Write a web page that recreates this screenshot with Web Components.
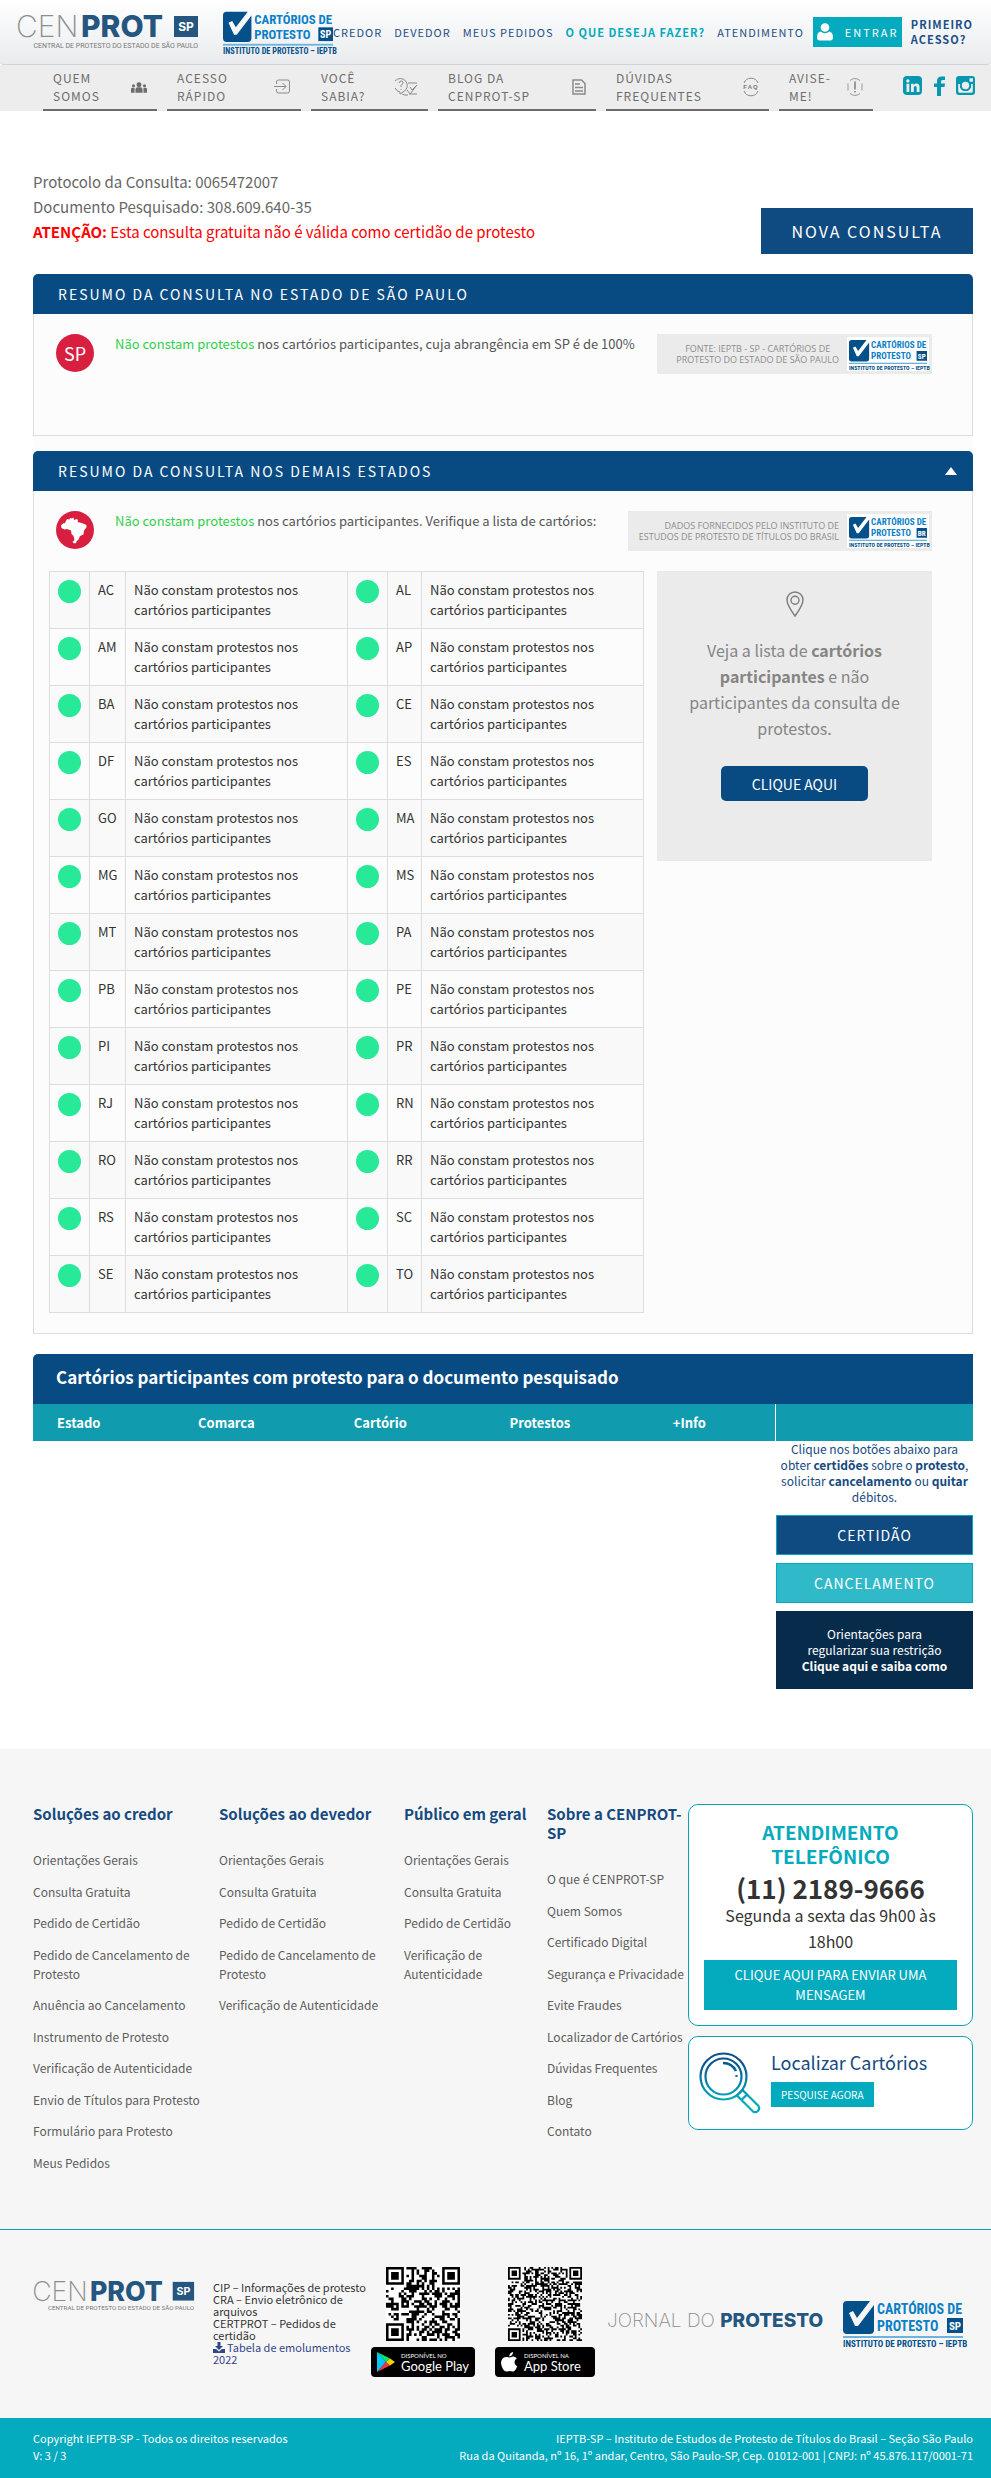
<!DOCTYPE html>
<html lang="pt-BR">
<head>
<meta charset="utf-8">
<meta name="viewport" content="width=device-width, initial-scale=1">
<title>CENPROT SP - Consulta de protesto</title>
<style>
  body { margin: 0; background: #fff; color: #333; font-family: "Noto Sans CJK SC", "Noto Sans", sans-serif; font-size: 13px; line-height: 20px; }
</style>
</head>
<body>
<cp-page></cp-page>

<script>
const BASE = `
  *, *::before, *::after { box-sizing: border-box; }
  :host { display: block; }
  a { color: inherit; text-decoration: none; }
  button { font: inherit; color: inherit; border: 0; margin: 0; cursor: pointer; }
  h2, h3, p, ul { margin: 0; padding: 0; font-size: inherit; font-weight: inherit; }
  ul { list-style: none; }
  svg { display: block; overflow: visible; }
`;

function component(name, css, html) {
  customElements.define(name, class extends HTMLElement {
    constructor() {
      super();
      this.attachShadow({ mode: 'open' });
    }
    connectedCallback() {
      const t = document.createElement('template');
      t.innerHTML = `<style>${BASE}${css}</style>` + (typeof html === 'function' ? html(this) : html);
      this.shadowRoot.replaceChildren(t.content.cloneNode(true));
    }
  });
}

/* ---------- logos ---------- */

component('cenprot-logo', `svg { width: 100%; height: auto; }`, `
  <svg viewBox="0 0 182 34" role="img" aria-label="CENPROT SP">
    <g font-family="Inter, sans-serif" font-size="30">
      <text x="-1" y="22" font-weight="200" fill="#8d8d8d">CEN</text>
      <text x="64" y="22" font-weight="800" fill="#24567f">PROT</text>
    </g>
    <rect x="157" y="1" width="24" height="21" fill="#24567f"/>
    <text x="169" y="16" text-anchor="middle" font-family="Inter, sans-serif" font-size="12" font-weight="700" fill="#fff">SP</text>
    <text x="181" y="33" text-anchor="end" font-family="Roboto, sans-serif" font-size="7" fill="#777">CENTRAL DE PROTESTO DO ESTADO DE SÃO PAULO</text>
  </svg>`);

component('cartorios-logo', `svg { width: 100%; height: auto; }`, el => `
  <svg viewBox="0 0 120 50" role="img" aria-label="Cartórios de Protesto">
    <path d="M4 3h23l-13 17-4-7-4 2 6 13h3L31 7v25a4 4 0 0 1-4 4H4a4 4 0 0 1-4-4V7a4 4 0 0 1 4-4z" fill="#04508a"/>
    <g font-family="'Liberation Sans Narrow', 'Roboto Condensed', 'Liberation Sans', sans-serif" font-weight="700">
      <text x="34" y="16" font-size="14" fill="#0b7fc7">CARTÓRIOS DE</text>
      <text x="34" y="33" font-size="14" fill="#0b7fc7">PROTESTO</text>
      <rect x="104" y="20" width="16" height="15" fill="#04508a"/>
      <text x="112" y="32" font-size="11" text-anchor="middle" fill="#fff">${el.getAttribute('uf') || 'SP'}</text>
      <rect y="38" width="120" height="2" fill="#6fb3dd"/>
      <text x="0" y="49" font-size="9" fill="#04508a">INSTITUTO DE PROTESTO – IEPTB</text>
    </g>
  </svg>`);

/* ---------- icons ---------- */

const ICONS = {
  people: ['0 0 18 12', `<g fill="#6d6d6d"><circle cx="9" cy="3" r="2.8"/><path d="M5 12V8.500q0-2.500 2.500-2.500h3q2.500 0 2.500 2.500V12z"/><circle cx="2.800" cy="4.300" r="1.700"/><circle cx="15.200" cy="4.300" r="1.700"/><path d="M0 12V8q0-1.500 1.500-1.500H4V12zM18 12V8q0-1.500-1.500-1.500H14V12z"/></g>`, 16],
  enter: ['0 0 17 16', `<g fill="none" stroke="#8a8a8a"><path d="M2.500 5V3q0-2 2-2h9q2 0 2 2v9q0 2-2 2h-9q-2 0-2-2v-2M0 7.500h12M8.500 4l3.500 3.500L8.500 11"/></g>`, 17],
  ask: ['0 0 24 20', `<g fill="none" stroke="#8a8a8a"><path d="M1 4A7 7 0 1 1 9 15l-3 2v-2A7 7 0 0 1 1 11M5 6q.5-2.500 3-2 2 1 .5 3L7 8.500V10M7 12v1M14 6h9M15 17h8M13 13l3 4 7-9M16 10l2 3 4-4M8 17l3 1h3"/></g>`, 24],
  doc: ['0 0 14 16', `<g fill="none" stroke="#8a8a8a" stroke-width="1.500"><path d="M1 1h8.500L13 4.500V15H1z"/><path d="M3 5h5M3 8.500h8M3 12h8"/></g>`, 14],
  faq: ['0 0 16 20', `<g fill="none" stroke="#8a8a8a"><path d="M1 6A7.500 7.500 0 0 1 15 6M1 14a7.500 7.500 0 0 0 14 0"/></g><text x="8" y="12" font-size="6" font-weight="700" fill="#777" text-anchor="middle" font-family="Liberation Sans, sans-serif">FAQ</text>`, 16],
  alert: ['0 0 16 20', `<g fill="none" stroke="#9a9a9a"><path d="M3 3.500A7.500 7.500 0 0 1 13 3.500M1 6.500v7M15 6.500v7M3 16.500A7.500 7.500 0 0 0 13 16.500"/><path d="M8 4.500v8M8 14v1.500" stroke-width="2"/></g>`, 16],
  linkedin: ['0 0 20 20', `<rect width="19" height="19" rx="4" fill="#0698ae"/><g fill="#eee"><circle cx="4.900" cy="4.900" r="1.700"/><path d="M3.500 7.800h2.800V16H3.500zM8 7.800h2.700v1.100q1-1.400 2.800-1.300 3 .2 3 3.600V16h-2.800v-4.500q0-1.600-1.400-1.600T10.800 11.500V16H8z"/></g>`, 20],
  facebook: ['0 0 11 20', `<path d="M3 20v-9H0V7.500h3V5Q3 .5 7.500.5H11V4H8.500Q7 4 7 5.500v2h4l-.5 3.500H7v9z" fill="#0698ae"/>`, 11],
  instagram: ['0 0 20 20', `<path fill-rule="evenodd" d="M3 0h13q3 0 3 3v13q0 3-3 3H3q-3 0-3-3V3q0-3 3-3zM13.500 2.300v3.400h3.400V2.300zM2.200 8v7.200q0 1.600 1.600 1.600h11.400q1.600 0 1.600-1.600V8h-1.900A5.600 5.600 0 1 1 4.100 8z" fill="#0698ae"/><circle cx="9.500" cy="9.500" r="4.600" fill="none" stroke="#0698ae" stroke-width="2"/><circle cx="9.500" cy="9.500" r="3.700" fill="#ededed"/>`, 20],
  user: ['0 0 16 18', `<g fill="#fff"><circle cx="8" cy="4.500" r="4.300"/><path d="M3.500 8.500q4.500 3.500 9 0Q16 9.500 16 14q0 3.500-2.500 3.500h-11Q0 17.500 0 14q0-4.500 3.500-5.500z"/></g>`, 16],
  pin: ['0 0 18 26', `<g fill="none" stroke="#7c7c7c" stroke-width="1.400"><path d="M9 25Q1 14 1 9a8 8 0 0 1 16 0q0 5-8 16z"/><circle cx="9" cy="9.300" r="4"/></g>`, 18],
  download: ['0 0 12 11', `<path d="M4.500 0h3v4H10L6 8 2 4h2.500zM0 7h3l3 2.500L9 7h3v4H0z" fill="#33478a"/>`, 12],
  up: ['0 0 12 8', `<path d="M6 0l6 8H0z" fill="#fff"/>`, 12],
  lens: ['0 0 62 62', `<defs><linearGradient id="g" gradientUnits="userSpaceOnUse" x1="0" y1="10" x2="0" y2="48"><stop offset="0" stop-color="#08528f"/><stop offset="1" stop-color="#04a9bb"/></linearGradient></defs><g fill="none" stroke="url(#g)" stroke-width="2.200"><circle cx="24.500" cy="24.500" r="23"/><circle cx="24.500" cy="24.500" r="18"/><path d="M24 11Q33 11 37 19" stroke-width="2.600"/><path d="M37.500 23v2"/><path d="M38 43.500 43.500 38 59.500 54A4 4 0 0 1 54 59.500zM42.500 48l5.500-5.500"/></g>`, 62],
  brazil: ['0 0 38 38', `<circle cx="19" cy="19" r="19" fill="#d81f40"/><path d="M11 8l2.500.5.500-1.500 2 .5 1.500-1 .5 2.500 3-1 1 1.500-.5 1.500 4 1 4 1.500q2 1.500.5 3.500l-2 2.500-.5 4-3.500 1.500-1.500 3.500-2 2-1 2-2-.5-1-1 2-2-1-4-2-2-.5-3.500-4-1.500-2.500.5-3-1.500-.5-2.500 2-2 2-.5z" fill="#fff"/>`, 38]
};
component('cp-icon', `:host { display: inline-block; flex: none; }`, el => {
  const [box, body, width] = ICONS[el.getAttribute('name')];
  return `<svg viewBox="${box}" width="${width}" aria-hidden="true">${body}</svg>`;
});

/* ---------- header ---------- */

component('site-header', `
  header { display: flex; align-items: center; min-height: 65px; padding: 0 18px 0 17px; background: linear-gradient(#fff, #e9ebee); border-bottom: 1px solid #cfd3da; border-radius: 0 0 4px 4px; }
  cenprot-logo { flex: 0 0 182px; margin-right: 24px; }
  cartorios-logo { flex: 0 0 110px; }
  nav { flex: 1; display: flex; align-items: center; color: #1b4f86; font-size: 11px; line-height: 15px; letter-spacing: 1px; white-space: nowrap; }
  nav > a { margin-right: 12px; }
  nav > a.on { color: #04aabd; font-weight: 700; }
  nav > a.enter { display: flex; align-items: center; gap: 12px; width: 89px; height: 30px; margin: 0 9px 0 -3px; padding: 0 4px; background: #04aabd; color: #fff; font-size: 11px; letter-spacing: 2px; }
  nav > a.first { white-space: normal; margin: 0; font-weight: 700; color: #1b4f86; }
`, `
  <header>
    <cenprot-logo></cenprot-logo>
    <cartorios-logo></cartorios-logo>
    <nav>
      <a href="#">CREDOR</a><a href="#">DEVEDOR</a><a href="#">MEUS PEDIDOS</a>
      <a href="#" class="on">O QUE DESEJA FAZER?</a><a href="#">ATENDIMENTO</a>
      <a href="#" class="enter"><cp-icon name="user"></cp-icon>ENTRAR</a>
      <a href="#" class="first">PRIMEIRO ACESSO?</a>
    </nav>
  </header>`);

component('sub-nav', `
  nav { display: flex; min-height: 46px; background: #ededed; padding: 0 15px 0 43px; }
  .items { flex: 1; display: grid; grid-template-columns: 114fr 134fr 117fr 158fr 163fr 94fr; gap: 10px; }
  .items a { display: flex; align-items: center; justify-content: space-between; padding: 0 10px; border-bottom: 2px solid #6d6d6d; color: #6d6d6d; font-size: 12px; line-height: 18px; letter-spacing: 1px; white-space: nowrap; }
  .social { display: flex; align-items: center; gap: 11px; margin-left: 30px; }
`, `
  <nav>
    <div class="items">
      <a href="#"><span>QUEM<br>SOMOS</span><cp-icon name="people"></cp-icon></a>
      <a href="#"><span>ACESSO<br>RÁPIDO</span><cp-icon name="enter"></cp-icon></a>
      <a href="#"><span>VOCÊ<br>SABIA?</span><cp-icon name="ask"></cp-icon></a>
      <a href="#"><span>BLOG DA<br>CENPROT-SP</span><cp-icon name="doc"></cp-icon></a>
      <a href="#"><span>DÚVIDAS<br>FREQUENTES</span><cp-icon name="faq"></cp-icon></a>
      <a href="#"><span>AVISE-<br>ME!</span><cp-icon name="alert"></cp-icon></a>
    </div>
    <div class="social">
      <a href="#" aria-label="LinkedIn"><cp-icon name="linkedin"></cp-icon></a>
      <a href="#" aria-label="Facebook"><cp-icon name="facebook"></cp-icon></a>
      <a href="#" aria-label="Instagram"><cp-icon name="instagram"></cp-icon></a>
    </div>
  </nav>`);

/* ---------- query summary ---------- */

component('query-info', `
  :host { display: flex; justify-content: space-between; align-items: flex-end; margin: 58px 0 20px; }
  p { font-size: 15px; line-height: 25px; color: #666; padding-bottom: 10px; }
  .warn { color: #f00; }
  button { width: 212px; height: 46px; padding: 0; background: #0f4a80; color: #fff; font-size: 16px; letter-spacing: 2px; }
`, `
  <p>Protocolo da Consulta: 0065472007<br>Documento Pesquisado: 308.609.640-35<br>
  <span class="warn"><b>ATENÇÃO:</b> Esta consulta gratuita não é válida como certidão de protesto</span></p>
  <button type="button">NOVA CONSULTA</button>`);

component('result-panel', `
  h2 { display: flex; align-items: center; justify-content: space-between; min-height: 40px; padding: 0 16px 0 25px; background: #084a82; color: #fff; border-radius: 5px 5px 0 0; font-size: 14px; letter-spacing: 2px; }
  .body { background: #fcfcfc; border: 1px solid #ddd; border-top: 0; padding: 20px 40px 20px 15px; }
  .top { display: flex; align-items: flex-start; min-height: 60px; }
  .mark { width: 38px; margin: 0 21px 0 7px; }
  .text { flex: 1; font-size: 13px; line-height: 20px; color: #555; white-space: nowrap; }
`, el => `
  <h2>${el.getAttribute('heading')}${el.hasAttribute('open') ? '<cp-icon name="up"></cp-icon>' : ''}</h2>
  <div class="body">
    <div class="top"><div class="mark"><slot name="mark"></slot></div><div class="text"><slot name="text"></slot></div><slot name="source"></slot></div>
    <slot></slot>
  </div>`);

component('sp-mark', `
  :host { display: grid; place-items: center; width: 38px; height: 38px; border-radius: 50%; background: #d81f40; color: #fff; font: 18px/20px "Noto Sans CJK SC", sans-serif; }
`, `SP`);

component('source-badge', `
  :host { display: flex; align-items: center; justify-content: flex-end; gap: 8px; height: 40px; padding: 0 3px 0 9px; background: #ebebeb; color: #8d8d8d; font: 9px/11px "Open Sans", sans-serif; white-space: nowrap; }
  cartorios-logo { width: 82px; padding: 1px 2px; background: #fff; }
`, el => `<div><slot></slot></div><cartorios-logo uf="${el.getAttribute('uf')}"></cartorios-logo>`);

const STATES = ['AC AL', 'AM AP', 'BA CE', 'DF ES', 'GO MA', 'MG MS', 'MT PA', 'PB PE', 'PI PR', 'RJ RN', 'RO RR', 'RS SC', 'SE TO'];
component('state-table', `
  table { width: 100%; border-collapse: collapse; table-layout: fixed; }
  td { border: 1px solid #ddd; padding: 8px; vertical-align: top; font-size: 13px; line-height: 20px; color: #333; }
  tr:nth-child(odd) { background: #f9f9f9; }
  .c1 { width: 40px; } .c2 { width: 36px; } .c3 { width: 34px; }
  i { display: block; width: 23px; height: 23px; border-radius: 50%; background: #27e998; }
  td span { display: block; max-width: 170px; }
`, `<table><colgroup><col class="c1"><col class="c2"><col><col class="c1"><col class="c3"><col></colgroup><tbody>${
  STATES.map(r => '<tr>' + r.split(' ').map(s => `<td><i></i></td><td>${s}</td><td><span>Não constam protestos nos cartórios participantes</span></td>`).join('') + '</tr>').join('')
}</tbody></table>`);

component('list-card', `
  :host { background: #ebebeb; color: #858585; text-align: center; padding: 20px 20px 60px; }
  p { font-size: 16px; line-height: 26px; margin: 15px 0 25px; }
  button { width: 147px; height: 35px; padding: 0; border-radius: 5px; background: #084a82; color: #fff; font-size: 14px; }
`, `<cp-icon name="pin"></cp-icon>
  <p>Veja a lista de <b>cartórios participantes</b> e não participantes da consulta de protestos.</p>
  <button type="button">CLIQUE AQUI</button>`);

/* ---------- participating offices ---------- */

component('office-table', `
  h2 { padding: 12px 23px; min-height: 50px; line-height: 22px; background: #084a82; color: #fff; font-size: 17px; font-weight: 700; border-radius: 5px 0 0 0; }
  .cols { display: flex; align-items: flex-start; gap: 1px; }
  table { flex: 1; border-collapse: collapse; table-layout: fixed; }
  th { height: 37px; padding: 0 0 0 24px; background: #109cae; color: #fff; font-size: 13px; font-weight: 700; text-align: left; }
  aside { flex: 0 0 197px; font-size: 12px; line-height: 16px; color: #164a80; text-align: center; }
  .bar { height: 37px; background: #109cae; }
  aside p { padding-bottom: 10px; white-space: nowrap; }
  aside button { display: block; width: 100%; height: 40px; margin-bottom: 8px; padding: 0; border: 1px solid #04aabd; color: #fff; font-size: 14px; letter-spacing: 1px; }
  .a { background: #0f4a80; } .b { background: #30bac9; }
  .c { display: grid; align-content: center; height: 78px; background: #072b4b; color: #fff; }
`, `
  <h2>Cartórios participantes com protesto para o documento pesquisado</h2>
  <div class="cols">
    <table>
      <colgroup><col style="width:19%"><col style="width:21%"><col style="width:21%"><col style="width:22%"><col style="width:17%"></colgroup>
      <thead><tr><th>Estado</th><th>Comarca</th><th>Cartório</th><th>Protestos</th><th>+Info</th></tr></thead>
    </table>
    <aside>
      <div class="bar"></div>
      <p>Clique nos botões abaixo para<br>obter <b>certidões</b> sobre o <b>protesto</b>,<br>solicitar <b>cancelamento</b> ou <b>quitar</b><br>débitos.</p>
      <button type="button" class="a">CERTIDÃO</button>
      <button type="button" class="b">CANCELAMENTO</button>
      <a class="c" href="#"><span>Orientações para<br>regularizar sua restrição<br><b>Clique aqui e saiba como</b></span></a>
    </aside>
  </div>`);

/* ---------- footer ---------- */

component('link-column', `
  h3 { color: #164a80; font-size: 15px; line-height: 19px; font-weight: 700; margin-bottom: 27px; }
  li { font-size: 12px; line-height: 19px; color: #5d5d5d; margin-bottom: 12px; }
  li:nth-child(odd) { margin-bottom: 13px; }
`, el => `<h3>${el.getAttribute('heading')}</h3><ul>${el.getAttribute('links').split('|').map(l => `<li><a href="#">${l}</a></li>`).join('')}</ul>`);

component('contact-cards', `
  section { background: #fff; border: 1px solid #04a5b8; border-radius: 10px; }
  .phone { padding: 15px 15px; text-align: center; margin-bottom: 10px; }
  h3 { color: #04aabd; font-size: 19px; line-height: 24px; font-weight: 700; }
  .num { font-size: 26px; line-height: 28px; padding: 6px 0 0; font-weight: 700; color: #333; }
  .when { font-size: 16px; line-height: 26px; padding: 0 18px 6px; }
  button { background: #04aabd; color: #fff; }
  .msg { display: block; width: 100%; padding: 5px 20px; font-size: 13px; line-height: 20px; }
  .find { display: flex; gap: 10px; align-items: flex-start; padding: 15px 10px; min-height: 94px; }
  .find h3 { color: #164a80; font-size: 18px; line-height: 20px; font-weight: 400; margin-bottom: 10px; }
  .find button { height: 25px; padding: 0 10px; font-size: 10px; line-height: 20px; }
`, `
  <section class="phone">
    <h3>ATENDIMENTO<br>TELEFÔNICO</h3>
    <p class="num">(11) 2189-9666</p>
    <p class="when">Segunda a sexta das 9h00 às 18h00</p>
    <button type="button" class="msg">CLIQUE AQUI PARA ENVIAR UMA MENSAGEM</button>
  </section>
  <section class="find">
    <cp-icon name="lens"></cp-icon>
    <div><h3>Localizar Cartórios</h3><button type="button">PESQUISE AGORA</button></div>
  </section>`);

/* QR artwork: three finder squares, the rest filled from a seeded sequence */
function qr(n, seed) {
  let d = '', s = seed;
  const inFinder = (x, y) => (x < 8 && y < 8) || (x > n - 9 && y < 8) || (x < 8 && y > n - 9);
  for (let y = 0; y < n; y++) for (let x = 0; x < n; x++) {
    s = (s * 1103515245 + 12345) % 2147483648;
    if (!inFinder(x, y) && (s >> 16) % 2) d += `M${x} ${y}h1v1h-1z`;
  }
  for (const [x, y] of [[0, 0], [n - 7, 0], [0, n - 7]])
    d += `M${x} ${y}h7v7h-7zM${x + 1} ${y + 1}v5h5v-5zM${x + 2} ${y + 2}h3v3h-3z`;
  return `<svg class="qr" viewBox="0 0 ${n} ${n}" aria-hidden="true"><rect width="${n}" height="${n}" fill="#fff"/><path d="${d}"/></svg>`;
}
component('store-badge', `
  :host { display: grid; justify-items: center; gap: 6px; }
  .qr { width: 74px; height: 74px; }
  a { display: flex; align-items: center; gap: 6px; width: 100%; height: 30px; padding: 0 6px; border-radius: 4px; background: #000; color: #fff; white-space: nowrap; font: 13px/14px Lato, sans-serif; }
  small { display: block; font-size: 6px; line-height: 7px; }
`, el => el.getAttribute('store') === 'google'
  ? qr(29, 7) + `<a href="#"><svg width="18" height="20" viewBox="0 0 18 20"><path d="M0 0v20l9-10z" fill="#00c8ff"/><path d="M0 0l9 10 4-3.500z" fill="#00e676"/><path d="M0 20l9-10 4 3.500z" fill="#f43249"/><path d="M13 6.500l5 3.500-5 3.500L9 10z" fill="#ffd200"/></svg><span><small>DISPONÍVEL NO</small>Google Play</span></a>`
  : qr(41, 23) + `<a href="#"><svg width="17" height="20" viewBox="0 0 17 20" fill="#fff"><path d="M8.500 5.500Q9.500 5.500 11 4.800q3-.8 4.800 1.700-2.500 1.500-2.300 4t2.800 3.800q-2.500 6-5 5.200-2.500-1-5 0Q3 20 1 15T1.200 7Q3 4.500 6 5zM8.200 4.500Q8.500.8 12 0q.2 3.800-3.800 4.500z"/></svg><span><small>DISPONÍVEL NA</small>App Store</span></a>`);

component('site-footer', `
  footer { background: #f6f6f6; margin-top: 60px; }
  .links { display: grid; grid-template-columns: 186fr 185fr 143fr 141fr 285fr; padding: 55px 18px 45px 33px; }
  .brands { display: flex; border-top: 1px solid #04a5b8; padding: 37px 28px 41px 33px; }
  .brands > cenprot-logo { flex: 0 0 162px; margin-top: 14px; }
  .list { flex: 0 0 158px; margin-left: 18px; padding-top: 14px; font-size: 11px; line-height: 12px; }
  .list a { color: #33478a; } .list cp-icon { margin-right: 2px; height: 10px; }
  store-badge { flex: 0 0 102px; }
  store-badge + store-badge { flex-basis: 100px; margin-left: 20px; }
  .jornal { margin: 43px 0 0 12px; flex: 1; font: 19px/22px Inter, sans-serif; font-weight: 200; color: #8d8d8d; white-space: nowrap; }
  .jornal b { font-weight: 800; color: #24567f; }
  .brands > cartorios-logo { flex: 0 0 120px; margin-top: 31px; }
  .legal { display: flex; justify-content: space-between; padding: 12px 18px 14px 33px; background: #04aabd; color: #fff; font-size: 11px; line-height: 17px; }
  .legal p + p { text-align: right; }
`, `
  <footer>
    <div class="links">
      <link-column heading="Soluções ao credor" links="Orientações Gerais|Consulta Gratuita|Pedido de Certidão|Pedido de Cancelamento de<br>Protesto|Anuência ao Cancelamento|Instrumento de Protesto|Verificação de Autenticidade|Envio de Títulos para Protesto|Formulário para Protesto|Meus Pedidos"></link-column>
      <link-column heading="Soluções ao devedor" links="Orientações Gerais|Consulta Gratuita|Pedido de Certidão|Pedido de Cancelamento de<br>Protesto|Verificação de Autenticidade"></link-column>
      <link-column heading="Público em geral" links="Orientações Gerais|Consulta Gratuita|Pedido de Certidão|Verificação de<br>Autenticidade"></link-column>
      <link-column heading="Sobre a CENPROT-SP" links="O que é CENPROT-SP|Quem Somos|Certificado Digital|Segurança e Privacidade|Evite Fraudes|Localizador de Cartórios|Dúvidas Frequentes|Blog|Contato"></link-column>
      <contact-cards></contact-cards>
    </div>
    <div class="brands">
      <cenprot-logo></cenprot-logo>
      <p class="list">CIP – Informações de protesto<br>CRA – Envio eletrônico de<br>arquivos<br>CERTPROT – Pedidos de<br>certidão<br><a href="#"><cp-icon name="download"></cp-icon>Tabela de emolumentos<br>2022</a></p>
      <store-badge store="google"></store-badge>
      <store-badge store="apple"></store-badge>
      <p class="jornal">JORNAL DO <b>PROTESTO</b></p>
      <cartorios-logo></cartorios-logo>
    </div>
    <div class="legal">
      <p>Copyright IEPTB-SP - Todos os direitos reservados<br>V: 3 / 3</p>
      <p>IEPTB-SP – Instituto de Estudos de Protesto de Títulos do Brasil – Seção São Paulo<br>Rua da Quitanda, nº 16, 1º andar, Centro, São Paulo-SP, Cep. 01012-001 | CNPJ: nº 45.876.117/0001-71</p>
    </div>
  </footer>`);

component('cp-page', `
  main { padding: 0 18px 0 33px; }
  .ok { color: #2fd04c; }
  .panels { display: grid; grid-template-columns: minmax(0, 1fr); gap: 15px; background: #fcfcfc; margin-bottom: 20px; }
  .space { height: 21px; }
  .split { display: grid; grid-template-columns: minmax(0, 595fr) minmax(0, 275fr); gap: 13px; align-items: start; }
  source-badge { text-align: center; width: 275px; }
  source-badge.right { text-align: right; width: 304px; }
`, `
  <site-header></site-header>
  <sub-nav></sub-nav>
  <main>
    <query-info></query-info>
    <div class="panels">
      <result-panel heading="RESUMO DA CONSULTA NO ESTADO DE SÃO PAULO">
        <sp-mark slot="mark"></sp-mark>
        <span slot="text"><span class="ok">Não constam protestos</span> nos cartórios participantes, cuja abrangência em SP é de 100%</span>
        <source-badge slot="source" uf="SP">FONTE: IEPTB - SP - CARTÓRIOS DE<br>PROTESTO DO ESTADO DE SÃO PAULO</source-badge>
        <div class="space"></div>
      </result-panel>
      <result-panel heading="RESUMO DA CONSULTA NOS DEMAIS ESTADOS" open>
        <cp-icon slot="mark" name="brazil"></cp-icon>
        <span slot="text"><span class="ok">Não constam protestos</span> nos cartórios participantes. Verifique a lista de cartórios:</span>
        <source-badge slot="source" class="right" uf="BR">DADOS FORNECIDOS PELO INSTITUTO DE<br>ESTUDOS DE PROTESTO DE TÍTULOS DO BRASIL</source-badge>
        <div class="split">
          <state-table></state-table>
          <list-card></list-card>
        </div>
      </result-panel>
    </div>
    <office-table></office-table>
  </main>
  <site-footer></site-footer>`);
</script>
</body>
</html>
